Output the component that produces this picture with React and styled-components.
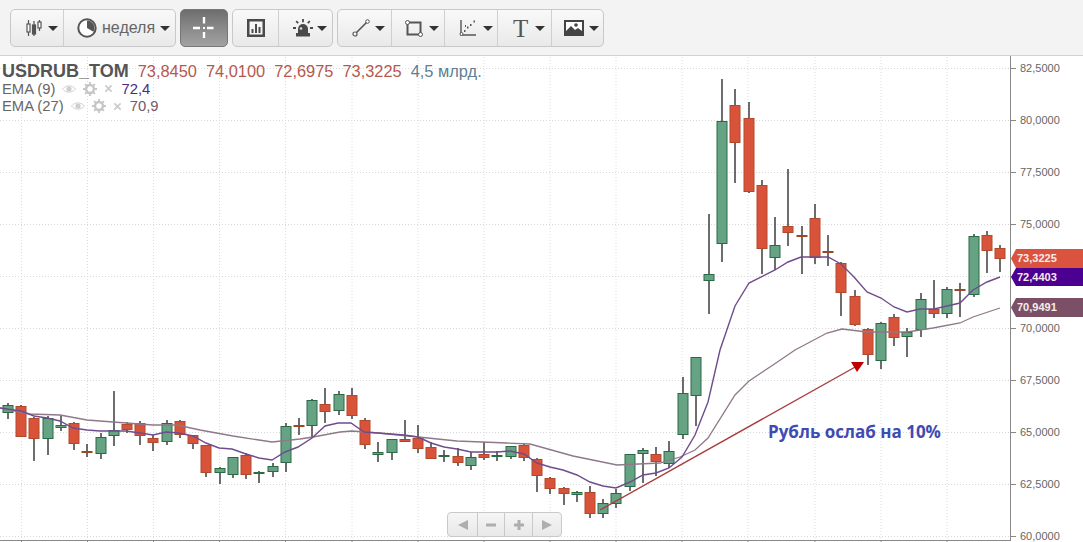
import React from "react";
import styled, { createGlobalStyle } from "styled-components";

const Global = createGlobalStyle`
  html, body { margin: 0; padding: 0; background: #fff; overflow: hidden; }
  body { font-family: "Liberation Sans", Arial, sans-serif; }
`;

const Page = styled.div`
  width: 1083px;
  height: 542px;
  display: flex;
  flex-direction: column;
  overflow: hidden;
`;

const Toolbar = styled.div`
  height: 56px;
  flex: none;
  display: flex;
  align-items: flex-start;
  gap: 4px;
  padding: 9px 0 0 10px;
  box-sizing: border-box;
  background: #f3f3f3;
  border-bottom: 1px solid #d2d2d2;
`;

const Group = styled.div`
  display: flex;
  height: 38px;
  box-sizing: border-box;
  border: 1px solid #c8c8c8;
  border-radius: 5px;
  background: linear-gradient(#f9f9f9, #e9e9e9);
`;

const ToolButton = styled.div`
  width: ${p => p.$w}px;
  box-sizing: border-box;
  display: flex;
  align-items: center;
  justify-content: ${p => p.$left ? "flex-start" : "center"};
  padding-left: ${p => p.$left ? `${p.$left}px` : 0};
  gap: ${p => p.$gap ?? 6}px;
  color: #666;
  font-size: 16px;
  & + & { border-left: 1px solid #cfcfcf; }
`;

const ActiveButton = styled.div`
  width: 48px;
  height: 38px;
  box-sizing: border-box;
  border: 1px solid #777;
  border-radius: 5px;
  background: linear-gradient(#6e6e6e, #a3a3a3);
  display: flex;
  align-items: center;
  justify-content: center;
`;

const Caret = styled.span`
  width: 0;
  height: 0;
  border-left: 5px solid transparent;
  border-right: 5px solid transparent;
  border-top: 5px solid #333;
  flex: none;
`;

const SerifT = styled.span`
  font-family: "Liberation Serif", serif;
  font-size: 25px;
  line-height: 25px;
  color: #555;
`;

const ChartArea = styled.div`
  position: relative;
  flex: 1;
  background: #fff;
`;

const ChartSvg = styled.svg`
  display: block;
  width: 1083px;
  height: 486px;
`;

const AxisText = styled.text`
  font-family: "Liberation Sans", Arial, sans-serif;
  font-size: 11px;
  fill: #666;
`;

const Legend = styled.div`
  position: absolute;
  left: 2px;
  top: 6px;
  display: flex;
  flex-direction: column;
`;

const SymbolRow = styled.div`
  display: flex;
  align-items: baseline;
  gap: 9px;
  height: 18px;
  line-height: 18px;
  font-size: 16.400px;
  color: #b5584e;
  white-space: nowrap;
`;

const Symbol = styled.span`
  font-size: 18px;
  font-weight: 700;
  color: #555;
`;

const Volume = styled.span`
  color: #5f8094;
`;

const EmaRow = styled.div`
  display: flex;
  align-items: center;
  gap: 7px;
  height: 17.500px;
  font-size: 14.800px;
  color: #666;
  white-space: nowrap;
`;

const EmaValue = styled.span`
  color: ${p => p.$c};
  margin-left: 1px;
`;

const Tag = styled.div`
  position: absolute;
  left: 1011px;
  top: ${p => p.$top}px;
  width: 72px;
  height: ${p => p.$h}px;
  background: ${p => p.$c};
  clip-path: polygon(0 50%, 5px 0, 100% 0, 100% 100%, 5px 100%);
  color: #f6ecec;
  font-size: 11px;
  font-weight: 700;
  line-height: ${p => p.$h}px;
  padding-left: 6px;
  box-sizing: border-box;
`;

const Note = styled.div`
  position: absolute;
  left: 768px;
  top: 365px;
  font-family: "Open Sans", sans-serif;
  font-size: 17px;
  font-weight: 700;
  line-height: 22px;
  color: #3f4bb3;
  white-space: nowrap;
`;

const Nav = styled.div`
  position: absolute;
  left: 447px;
  top: 456px;
  height: 25px;
  display: flex;
  box-sizing: border-box;
  border: 1px solid #c9c9c9;
  border-radius: 4px;
  background: linear-gradient(#f6f6f6, #e8e8e8);
`;

const NavButton = styled.div`
  width: ${p => p.$w}px;
  display: flex;
  align-items: center;
  justify-content: center;
  box-sizing: border-box;
  & + & { border-left: 1px solid #c9c9c9; }
`;

// top wick, body top, body bottom, bottom wick, colour
const candles = [
  [403,405,412,419,"g"],[405,406,436,437,"r"],[417,418,438,461,"r"],[416,418,438,455,"g"],[415,425,427,431,"g"],
  [422,423,443,450,"r"],[444,451,452,457,"r"],[433,437,453,459,"g"],[391,430,435,446,"g"],[422,424,429,433,"r"],
  [421,423,435,445,"r"],[435,438,442,451,"r"],[420,423,441,445,"g"],[420,421,434,438,"r"],[435,435,443,449,"r"],
  [445,445,472,477,"r"],[467,468,472,484,"g"],[457,457,474,478,"g"],[453,455,474,479,"r"],[471,472,473,483,"g"],
  [463,466,471,477,"g"],[423,426,462,472,"g"],[418,425,426,435,"r"],[399,400,425,437,"g"],[388,404,411,423,"r"],
  [391,394,410,415,"g"],[388,395,415,419,"r"],[418,420,444,449,"r"],[442,452,454,462,"g"],[439,439,452,460,"g"],
  [420,439,441,441,"r"],[425,438,448,453,"r"],[442,447,458,458,"r"],[450,455,456,462,"g"],[448,456,462,466,"r"],
  [452,457,465,470,"g"],[442,454,457,460,"r"],[451,455,456,461,"g"],[446,446,456,459,"g"],[443,445,457,461,"r"],
  [458,459,475,492,"r"],[477,478,488,494,"r"],[487,488,493,505,"r"],[491,492,494,502,"g"],[486,492,513,518,"r"],
  [499,503,513,518,"g"],[489,493,503,508,"g"],[454,454,486,491,"g"],[448,450,453,483,"g"],[447,454,461,476,"r"],
  [441,451,463,468,"g"],[377,393,434,439,"g"],[357,357,395,426,"g"],[214,274,280,314,"g"],[79,121,243,262,"g"],
  [89,105,142,183,"r"],[102,118,191,193,"r"],[180,185,248,274,"r"],[217,245,257,270,"g"],[169,226,232,246,"r"],
  [226,235,236,274,"r"],[204,218,257,264,"r"],[235,251,252,266,"r"],[262,263,292,316,"r"],[290,296,324,326,"r"],
  [328,329,354,365,"r"],[322,323,360,369,"g"],[314,317,337,346,"r"],[328,332,336,357,"g"],[293,299,329,337,"g"],
  [280,309,313,318,"r"],[287,289,313,318,"g"],[283,289,290,317,"r"],[234,236,294,297,"g"],[231,235,250,273,"r"],
  [245,248,258,272,"r"],
];

const ema9 = "0,408 21,411 34,416 47,418 60,421 73,428 87,430 100,431 113,431 126,431 140,433 153,435 166,432 179,433 193,436 206,443 219,448 232,449 246,454 259,458 272,460 285,452 298,447 312,438 325,426 338,423 351,423 364,432 378,433 404,435 418,437 431,443 444,447 457,449 471,452 484,452 497,452 510,451 524,454 537,463 550,467 563,470 577,475 590,482 603,486 616,488 630,482 643,475 656,473 669,468 682,457 695,435 708,402 720,350 735,306 749,283 775,270 788,262 801,257 828,257 841,264 854,277 867,292 881,298 894,307 907,312 920,309 934,309 947,306 960,303 973,290 987,282 1000,277";
const ema27 = "0,408 30,414 60,415 87,420 113,422 153,425 177,425 200,430 233,436 272,442 300,439 313,437 340,432 352,431 378,433 418,437 457,441 507,443 530,444 573,456 617,465 660,463 680,457 695,450 708,438 735,395 749,381 773,365 795,350 827,333 842,329 867,332 907,332 933,328 960,323 973,317 1000,308";

const prices = ["82,5000","80,0000","77,5000","75,0000","72,5000","70,0000","67,5000","65,0000","62,5000","60,0000"];
const HIDDEN_BY_TAGS = "72,5000";
const gridX = [21.5,87.5,153.5,219.5,285.5,352,418,484,550,616,682,748,815,881,947];

function Chart() {
  return (
    <ChartSvg viewBox="0 56 1083 486">
      {prices.map((_, i) => (
        <line key={i} x1="0" x2="1011" y1={68.5 + i * 52} y2={68.5 + i * 52} stroke="#d8d8d8" strokeDasharray="1 2" />
      ))}
      {gridX.map(x => (
        <line key={x} x1={x} x2={x} y1="57" y2="540" stroke="#dcdcdc" strokeDasharray="1 2" />
      ))}
      {candles.map((c, i) => {
        const x = Math.round(8 + i * 13.227);
        const [wt, bt, bb, wb, k] = c;
        const doji = bb - bt <= 2;
        const fill = k === "g" ? "#66a384" : "#d9533a";
        const stroke = k === "g" ? "#2a6a44" : doji ? "#9a4a22" : "#b04a2c";
        return (
          <g key={i}>
            <line x1={x} x2={x} y1={wt} y2={wb} stroke="#3c3c3c" strokeWidth="1.500" />
            <rect x={x - 5} y={bt + 0.5} width="10" height={Math.max(bb - bt, 1)} fill={fill} stroke={stroke} strokeWidth="1" />
          </g>
        );
      })}
      <polyline points={ema27} fill="none" stroke="#8f7889" strokeWidth="1.300" />
      <polyline points={ema9} fill="none" stroke="#6f4c8d" strokeWidth="1.400" />
      <line x1="600" y1="510" x2="857" y2="366" stroke="#a83c3c" strokeWidth="1.400" />
      <polygon points="851,362 864,362 857,372" fill="#c00000" />
      <line x1="1010.5" x2="1010.5" y1="56" y2="541" stroke="#888" />
      <line x1="0" x2="1011" y1="540.5" y2="540.5" stroke="#888" />
      {gridX.map(x => (
        <line key={x} x1={x} x2={x} y1="540" y2="542" stroke="#888" />
      ))}
      {prices.map((p, i) => (
        <g key={p}>
          <line x1="1011" x2="1016" y1={68.5 + i * 52} y2={68.5 + i * 52} stroke="#888" />
          {p !== HIDDEN_BY_TAGS && <AxisText x="1020" y={72 + i * 52}>{p}</AxisText>}
        </g>
      ))}
    </ChartSvg>
  );
}

const CandleIcon = () => (
  <svg width="16" height="18" viewBox="0 0 16 18">
    <g fill="#fff" stroke="#555" strokeWidth="1.200">
      <path d="M2.500 1v16M8 2v15M13.500 1v11" fill="none" />
      <rect x="1" y="5" width="3" height="8" />
      <rect x="6.500" y="6" width="3" height="9" fill="#555" />
      <rect x="12" y="3" width="3" height="6" />
    </g>
  </svg>
);
const ClockIcon = () => (
  <svg width="20" height="20" viewBox="0 0 20 20">
    <circle cx="10" cy="10" r="8.700" fill="#fff" stroke="#555" strokeWidth="2" />
    <path d="M10 10V2.500A7.500 7.500 0 0 1 16.500 13.700Z" fill="#555" />
  </svg>
);
const CrossIcon = () => (
  <svg width="22" height="22" viewBox="0 0 22 22">
    <path d="M11 0v6.500M11 15v6M0 11h7M14 11h6.500" stroke="#fff" strokeWidth="2.400" />
    <rect x="10" y="10" width="2" height="2" fill="#fff" />
  </svg>
);
const BarsIcon = () => (
  <svg width="18" height="18" viewBox="0 0 18 18">
    <rect x="1.250" y="1.250" width="15.500" height="15.500" fill="#f4f4f4" stroke="#4a4a4a" strokeWidth="2.500" />
    <path d="M5.500 14V10M9 14V5M12.500 14V8" stroke="#4a4a4a" strokeWidth="2" />
  </svg>
);
const SirenIcon = () => (
  <svg width="20" height="18" viewBox="0 0 20 18">
    <path d="M5 15v-5a5 5 0 0 1 10 0v5Z" fill="#4a4a4a" />
    <rect x="3" y="14" width="14" height="3.500" fill="#4a4a4a" />
    <path d="M10 0v3.200M3.200 2.200l2 2M16.800 2.200l-2 2M0 9h3M17 9h3" stroke="#4a4a4a" strokeWidth="1.800" />
    <circle cx="8" cy="9.500" r="1.300" fill="#ddd" />
  </svg>
);
const LineIcon = () => (
  <svg width="18" height="18" viewBox="0 0 18 18">
    <path d="M4 14L15 3" stroke="#555" strokeWidth="1.600" />
    <circle cx="3" cy="15" r="2" fill="#fff" stroke="#555" strokeWidth="1.200" />
    <circle cx="15.500" cy="2.500" r="1.800" fill="#fff" stroke="#555" strokeWidth="1" />
  </svg>
);
const RectIcon = () => (
  <svg width="18" height="17" viewBox="0 0 18 17">
    <rect x="2.500" y="2.500" width="13" height="12" fill="none" stroke="#555" strokeWidth="2" />
    <circle cx="2.500" cy="2.500" r="2" fill="#fff" stroke="#555" strokeWidth="1" />
    <circle cx="15.500" cy="14.500" r="2" fill="#fff" stroke="#555" strokeWidth="1" />
  </svg>
);
const ScatterIcon = () => (
  <svg width="18" height="18" viewBox="0 0 18 18">
    <path d="M2 1v15h15" fill="none" stroke="#555" strokeWidth="1.400" />
    <circle cx="2.500" cy="15" r="1.500" fill="#fff" stroke="#555" />
    <path d="M5 12l1.500 0M8 8.500l1.500 0M11 6l1.500 0M14.500 2.500l1.500 0M6 7l1 0" stroke="#555" strokeWidth="1.800" />
  </svg>
);
const PictureIcon = () => (
  <svg width="20" height="16" viewBox="0 0 20 16">
    <rect width="20" height="16" fill="#444" />
    <rect x="2" y="2" width="16" height="9" fill="#fff" />
    <path d="M2 11l5-5 4 4 3-2 4 3v1H2Z" fill="#444" />
    <circle cx="12" cy="5" r="1.800" fill="#444" />
  </svg>
);
const EyeIcon = () => (
  <svg width="14" height="10" viewBox="0 0 15 10">
    <path d="M0.500 5C4 0.500 11 0.500 14.500 5C11 9.500 4 9.500 0.500 5Z" fill="none" stroke="#cdcdcd" />
    <circle cx="7.500" cy="5" r="2.800" fill="#cdcdcd" />
  </svg>
);
const GearIcon = () => (
  <svg width="14" height="14" viewBox="0 0 15 15">
    <circle cx="7.500" cy="7.500" r="4.200" fill="none" stroke="#c6c6c6" strokeWidth="2.600" />
    <path d="M7.500 0v3M7.500 12v3M0 7.500h3M12 7.500h3M2.200 2.200l2 2M10.800 10.800l2 2M12.800 2.200l-2 2M4.200 10.800l-2 2" stroke="#c6c6c6" strokeWidth="2" />
  </svg>
);
const CrossSmall = () => (
  <svg width="9" height="9" viewBox="0 0 10 10">
    <path d="M1.500 1.500l7 7M8.500 1.500l-7 7" stroke="#cdcdcd" strokeWidth="2" />
  </svg>
);
const NavIcon = ({ d }) => (
  <svg width="12" height="12" viewBox="0 0 12 12"><path d={d} fill="#aeaeae" /></svg>
);

function EmaLine({ label, value, color }) {
  return (
    <EmaRow>
      <span>{label}</span>
      <EyeIcon /><GearIcon /><CrossSmall />
      <EmaValue $c={color}>{value}</EmaValue>
    </EmaRow>
  );
}

export default function App() {
  return (
    <Page>
      <Global />
      <Toolbar>
        <Group>
          <ToolButton $w={52} $left={15}><CandleIcon /><Caret /></ToolButton>
          <ToolButton $w={112} $gap={5} $left={13}><ClockIcon />неделя<Caret /></ToolButton>
        </Group>
        <ActiveButton><CrossIcon /></ActiveButton>
        <Group>
          <ToolButton $w={45}><BarsIcon /></ToolButton>
          <ToolButton $w={54} $gap={4} $left={14}><SirenIcon /><Caret /></ToolButton>
        </Group>
        <Group>
          <ToolButton $w={53} $gap={5} $left={14}><LineIcon /><Caret /></ToolButton>
          <ToolButton $w={53} $left={13}><RectIcon /><Caret /></ToolButton>
          <ToolButton $w={53} $left={14}><ScatterIcon /><Caret /></ToolButton>
          <ToolButton $w={54} $gap={7} $left={15}><SerifT>T</SerifT><Caret /></ToolButton>
          <ToolButton $w={52} $gap={5} $left={12}><PictureIcon /><Caret /></ToolButton>
        </Group>
      </Toolbar>
      <ChartArea>
        <Chart />
        <Legend>
          <SymbolRow>
            <Symbol>USDRUB_TOM</Symbol>
            <span>73,8450</span><span>74,0100</span><span>72,6975</span><span>73,3225</span>
            <Volume>4,5 млрд.</Volume>
          </SymbolRow>
          <EmaLine label="EMA (9)" value="72,4" color="#4b2a80" />
          <EmaLine label="EMA (27)" value="70,9" color="#75586e" />
        </Legend>
        <Tag $top={193} $h={19} $c="#d9533f">73,3225</Tag>
        <Tag $top={212} $h={18} $c="#4b0091">72,4403</Tag>
        <Tag $top={242} $h={19} $c="#7b5066">70,9491</Tag>
        <Note>Рубль ослаб на 10%</Note>
        <Nav>
          <NavButton $w={29}><NavIcon d="M1 6L11 1v10Z" /></NavButton>
          <NavButton $w={27}><NavIcon d="M1 4.500h10v3H1Z" /></NavButton>
          <NavButton $w={28}><NavIcon d="M1 4.500h3.500V1h3v3.500H11v3H7.500V11h-3V7.500H1Z" /></NavButton>
          <NavButton $w={29}><NavIcon d="M11 6L1 1v10Z" /></NavButton>
        </Nav>
      </ChartArea>
    </Page>
  );
}
